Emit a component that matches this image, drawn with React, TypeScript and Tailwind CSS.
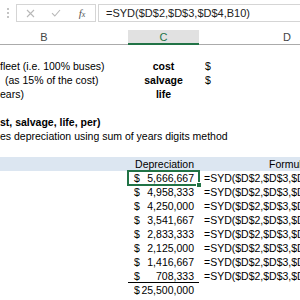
import React from "react";

const values = [
  "5,666,667",
  "4,958,333",
  "4,250,000",
  "3,541,667",
  "2,833,333",
  "2,125,000",
  "1,416,667",
  "708,333",
];

function Row({
  b,
  c,
  d,
  className = "",
  cClass = "",
}: {
  b?: React.ReactNode;
  c?: React.ReactNode;
  d?: React.ReactNode;
  className?: string;
  cClass?: string;
}) {
  return (
    <div className={`flex h-[14px] leading-[14px] whitespace-nowrap ${className}`}>
      <div className="w-[128px] shrink-0">{b}</div>
      <div className={`w-[71px] shrink-0 relative ${cClass}`}>{c}</div>
      <div className="flex-1 pl-[5px]">{d}</div>
    </div>
  );
}

function Money({ value }: { value: string }) {
  return (
    <div className="flex justify-between pl-[6px] pr-[5px]">
      <span>$</span>
      <span>{value}</span>
    </div>
  );
}

export default function App() {
  return (
    <div className="w-[300px] h-[300px] overflow-hidden bg-white font-['Liberation_Sans',Arial,sans-serif] text-[10.5px] text-black">
      {/* formula bar */}
      <div className="h-[30px] flex items-start pt-[4px]">
        <div className="w-[16px] h-[18px] flex flex-col items-center justify-center gap-[2px]">
          <span className="w-[2px] h-[2px] bg-[#c4c4c4]" />
          <span className="w-[2px] h-[2px] bg-[#c4c4c4]" />
          <span className="w-[2px] h-[2px] bg-[#c4c4c4]" />
        </div>
        <div className="w-[80px] h-[18px] border border-[#d5d5d5] grid grid-cols-3 items-center justify-items-center">
          <svg width="9" height="9" viewBox="0 0 9 9">
            <path d="M1 1 L8 8 M8 1 L1 8" stroke="#b8b8b8" strokeWidth="1.1" fill="none" />
          </svg>
          <svg width="10" height="8" viewBox="0 0 10 8">
            <path d="M1 4.2 L3.8 7 L9 1" stroke="#b8b8b8" strokeWidth="1.1" fill="none" />
          </svg>
          <span className="italic font-['Liberation_Serif',serif] text-[11px] leading-none text-[#555]">
            f<span className="text-[8px]">x</span>
          </span>
        </div>
        <div className="ml-[2px] flex-1 h-[18px] border border-r-0 border-[#d5d5d5] pl-[7px] text-[11px] leading-[16px] text-[#222] whitespace-nowrap overflow-hidden">
          =SYD($D$2,$D$3,$D$4,B10)
        </div>
      </div>

      {/* column headers */}
      <div className="flex h-[15px] text-[11px] leading-[14px] text-[#444]">
        <div className="w-[128px] border-b border-[#ababab]">
          <div className="w-[88px] text-center">B</div>
        </div>
        <div className="w-[71px] bg-[#e1e1e1] border-b-2 border-[#217346] text-center text-[#217346]">C</div>
        <div className="flex-1 border-b border-[#ababab] pl-[84px]">D</div>
      </div>

      {/* sheet rows */}
      <Row />
      <Row
        b="fleet (i.e. 100% buses)"
        c={<div className="text-center font-bold">cost</div>}
        d={<span className="pl-px">$</span>}
      />
      <Row
        b={<span className="pl-[5px]">(as 15% of the cost)</span>}
        c={<div className="text-center font-bold">salvage</div>}
        d={<span className="pl-px">$</span>}
      />
      <Row b="ears)" c={<div className="text-center font-bold">life</div>} />
      <Row />
      <Row b={<span className="font-bold">st, salvage, life, per)</span>} />
      <Row b="es depreciation using sum of years digits method" />
      <Row />
      <Row
        className="bg-[#dce6f1]"
        c={<div className="text-right pr-[5px]">Depreciation</div>}
        d={<span className="pl-[65px]">Formula</span>}
      />
      {values.map((v, i) => (
        <Row
          key={v}
          cClass={i === values.length - 1 ? "border-b border-black" : ""}
          c={
            <>
              <Money value={v} />
              {i === 0 && (
                <div className="absolute -top-px -left-px -right-px -bottom-px border-2 border-[#217346]">
                  <span className="absolute -right-[4px] -bottom-[4px] w-[6px] h-[6px] bg-[#217346] border border-white" />
                </div>
              )}
            </>
          }
          d={`=SYD($D$2,$D$3,$D$4,B${10 + i})`}
        />
      ))}
      <Row c={<Money value="25,500,000" />} />
    </div>
  );
}
